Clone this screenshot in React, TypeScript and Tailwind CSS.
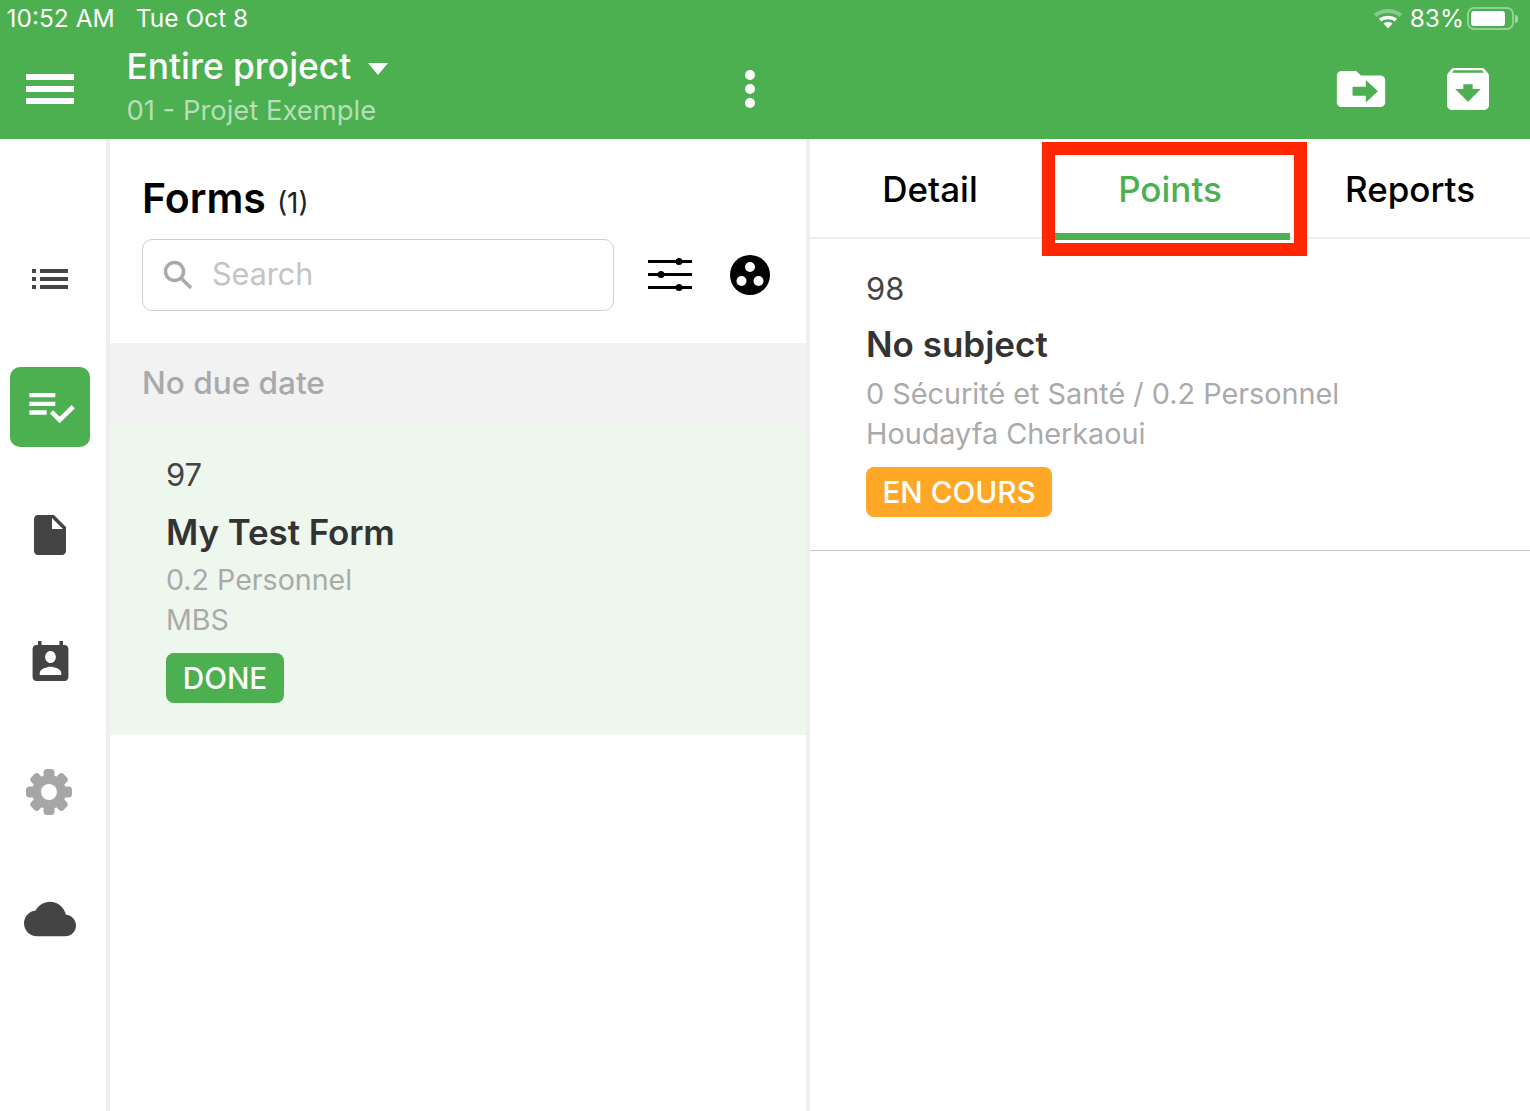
const SideIcon = ({ children, active }: { children: React.ReactNode; active?: boolean }) => (
  <div className="h-[128px] flex items-center justify-center">
    <div className={`w-[80px] h-[80px] rounded-[10px] flex items-center justify-center ${active ? "bg-[#4CAF50]" : ""}`}>
      {children}
    </div>
  </div>
);

const StatusBar = () => (
  <div className="h-[38px] pb-[1px] flex items-center justify-between pl-[6.5px] pr-[12px] text-white text-[24.5px] leading-none">
    <div className="flex gap-[21px]">
      <span>10:52 AM</span>
      <span>Tue Oct 8</span>
    </div>
    <div className="flex items-center">
      <svg width="28" height="22" viewBox="0 0 28 22" className="mr-[8px]">
        <path d="M1 7.5C8 1.5 20 1.5 27 7.5" fill="none" stroke="#fff" strokeOpacity="0.35" strokeWidth="4" />
        <path d="M6 12C10.500 8.500 17.500 8.500 22 12" fill="none" stroke="#fff" strokeWidth="3.500" />
        <path d="M9.500 15.500C12 13.500 16 13.500 18.500 15.500L14 20.500Z" fill="#fff" />
      </svg>
      <span className="mr-[3px]">83%</span>
      <div className="w-[47px] h-[23px] rounded-[7px] border-2 border-white/40 p-[2px]">
        <div className="h-full w-[34px] rounded-[3px] bg-white" />
      </div>
      <div className="w-[3px] h-[8px] ml-[1px] rounded-r-full bg-white/50" />
    </div>
  </div>
);

const Header = () => (
  <header className="h-[139px] shrink-0 bg-[#4CAF50] text-white">
    <StatusBar />
    <div className="h-[101px] flex items-center">
      <div className="w-[127px] pl-[26px] shrink-0">
        <div className="w-[48px] flex flex-col gap-[6px]">
          <div className="h-[6px] bg-white" />
          <div className="h-[6px] bg-white" />
          <div className="h-[6px] bg-white" />
        </div>
      </div>
      <div className="w-[618px] shrink-0 self-start">
        <div className="flex items-center h-[56px] mt-[1px]">
          <span className="text-[35.3px] -ml-[0.5px] font-medium leading-none">Entire project</span>
          <svg width="20" height="12" viewBox="0 0 20 12" className="ml-[17px] mt-[3px]">
            <path d="M0 0H20L10 12Z" fill="#fff" />
          </svg>
        </div>
        <div className="text-[27.4px] -ml-[0.5px] leading-none text-white/60 mt-[2px]">01 - Projet Exemple</div>
      </div>
      <div className="flex flex-col gap-[4px] mr-[577px]">
        <div className="w-[10px] h-[10px] rounded-full bg-white" />
        <div className="w-[10px] h-[10px] rounded-full bg-white" />
        <div className="w-[10px] h-[10px] rounded-full bg-white" />
      </div>
      <svg width="58" height="54" viewBox="0 0 24 24" preserveAspectRatio="none" className="shrink-0">
        <path
          fill="#fff"
          fillRule="evenodd"
          d="M20 6h-8l-2-2H4c-1.100 0-2 .9-2 2v12c0 1.100.9 2 2 2h16c1.100 0 2-.9 2-2V8c0-1.100-.9-2-2-2zm-6 12v-3H8.500v-4H14V8l5 5-5 5z"
        />
      </svg>
      <svg width="56" height="56" viewBox="0 0 24 24" className="shrink-0 ml-[50px]">
        <path
          fill="#fff"
          d="M20.540 5.230l-1.390-1.680C18.880 3.210 18.470 3 18 3H6c-.47 0-.88.21-1.160.55L3.460 5.230C3.170 5.570 3 6.020 3 6.500V19c0 1.100.9 2 2 2h14c1.100 0 2-.9 2-2V6.500c0-.48-.17-.93-.46-1.270zM12 17.500L6.500 12H10v-2h4v2h3.500L12 17.500zM5.120 5l.81-1h12l.94 1H5.120z"
        />
      </svg>
    </div>
  </header>
);

const Gear = () => (
  <svg width="48" height="48" viewBox="0 0 48 48" className="-ml-[2px] mt-[1px]">
    {[0, 45, 90, 135, 180, 225, 270, 315].map((a) => (
      <rect key={a} x="18.500" y="1" width="11" height="12" rx="3.500" fill="#a6a6a6" transform={`rotate(${a} 24 24)`} />
    ))}
    <circle cx="24" cy="24" r="17" fill="#a6a6a6" />
    <circle cx="24" cy="24" r="8" fill="#fff" />
  </svg>
);

const Sidebar = () => (
  <aside className="w-[106px] shrink-0 pt-[76px] pr-[6px]">
    <SideIcon>
      <svg width="36" height="20" viewBox="0 0 36 20" fill="#444">
        <rect x="0" y="0" width="4" height="4" />
        <rect x="8" y="0" width="28" height="4" />
        <rect x="0" y="8" width="4" height="4" />
        <rect x="8" y="8" width="28" height="4" />
        <rect x="0" y="16" width="4" height="4" />
        <rect x="8" y="16" width="28" height="4" />
      </svg>
    </SideIcon>
    <SideIcon active>
      <svg width="52" height="52" viewBox="0 0 24 24" fill="#fff" className="ml-[2px] -mt-[3px]">
        <path d="M14 10H2v2h12v-2zm0-4H2v2h12V6zM2 16h8v-2H2v2zm19.500-4.500L23 13l-6.990 7-4.510-4.500L13 14l3.010 3 5.490-5.500z" />
      </svg>
    </SideIcon>
    <SideIcon>
      <svg width="48" height="48" viewBox="0 0 24 24" fill="#444">
        <path d="M6 2c-1.100 0-1.990.9-1.990 2L4 20c0 1.100.89 2 1.990 2H18c1.100 0 2-.9 2-2V8l-6-6H6zm7 7V3.500L18.500 9H13z" />
      </svg>
    </SideIcon>
    <SideIcon>
      <svg width="43" height="48" viewBox="0 0 24 24" fill="#444" preserveAspectRatio="none">
        <path d="M20 3h-1V1h-2v2H7V1H5v2H4c-1.100 0-2 .9-2 2v14c0 1.100.9 2 2 2h16c1.100 0 2-.9 2-2V5c0-1.100-.9-2-2-2zm-8 3c1.660 0 3 1.340 3 3s-1.340 3-3 3-3-1.340-3-3 1.340-3 3-3zm6 12H6v-1c0-2 4-3.100 6-3.100s6 1.100 6 3.100v1z" />
      </svg>
    </SideIcon>
    <SideIcon>
      <Gear />
    </SideIcon>
    <SideIcon>
      <svg width="52" height="52" viewBox="0 0 24 24" fill="#444">
        <path d="M19.350 10.040C18.670 6.590 15.640 4 12 4 9.110 4 6.600 5.640 5.350 8.040 2.340 8.360 0 10.910 0 14c0 3.310 2.690 6 6 6h13c2.760 0 5-2.240 5-5 0-2.640-2.050-4.780-4.650-4.960z" />
      </svg>
    </SideIcon>
  </aside>
);

const FormsList = () => (
  <section className="w-[696px] shrink-0">
    <div className="h-[204px] pl-[32px]">
      <div className="h-[100px] flex items-baseline pt-[34px]">
        <span className="text-[41px] font-semibold leading-[50px] text-black">Forms</span>
        <span className="text-[28px] ml-[11px] text-[#222]">(1)</span>
      </div>
      <div className="flex items-center">
        <div className="w-[472px] h-[72px] rounded-[10px] border border-[#cfcfcf] flex items-center pl-[19px]">
          <svg width="32" height="32" viewBox="0 0 32 32" fill="none" stroke="#aaa" strokeWidth="3.500">
            <circle cx="12.500" cy="12.500" r="9" />
            <path d="M19 19L29 29" />
          </svg>
          <span className="ml-[18px] -mt-[2px] text-[30.5px] text-[#c4c4c4]">Search</span>
        </div>
        <svg width="46" height="36" viewBox="0 0 46 36" className="ml-[34px]">
          <g fill="#000">
            <rect x="0" y="3" width="44" height="3" />
            <circle cx="31" cy="4.500" r="3.500" />
            <rect x="0" y="16" width="44" height="3" />
            <circle cx="13" cy="17.500" r="3.500" />
            <rect x="0" y="29" width="44" height="3" />
            <circle cx="31" cy="30.500" r="3.500" />
          </g>
        </svg>
        <svg width="40" height="40" viewBox="0 0 40 40" className="ml-[36px]">
          <circle cx="20" cy="20" r="20" fill="#000" />
          <circle cx="20" cy="12" r="5" fill="#fff" />
          <circle cx="11.500" cy="26" r="5" fill="#fff" />
          <circle cx="28.500" cy="26" r="5" fill="#fff" />
        </svg>
      </div>
    </div>
    <div className="h-[82px] bg-[#f2f2f2] pl-[32px] flex items-center text-[31.5px] font-medium text-[#a9a9a9]">
      <span className="-mt-[2px]">No due date</span>
    </div>
    <div className="h-[310px] bg-[#edf7ee] pl-[56px] pt-[30px]">
      <div className="text-[31px] leading-[40px] text-[#444]">97</div>
      <div className="text-[35px] font-semibold leading-[44px] mt-[15px] text-[#333] tracking-[-0.1px]">My Test Form</div>
      <div className="text-[28.6px] leading-[40px] mt-[6px] text-[#aaa]">0.2 Personnel</div>
      <div className="text-[28.6px] leading-[40px] text-[#aaa]">MBS</div>
      <div className="mt-[13px] w-[118px] h-[50px] rounded-[8px] bg-[#4CAF50] text-white text-[29.7px] font-medium flex items-center justify-center">
        DONE
      </div>
    </div>
  </section>
);

const Tab = ({ label, active }: { label: string; active?: boolean }) => (
  <div className={`w-[240px] h-[99px] pt-[2px] flex items-center justify-center text-[35px] font-medium ${active ? "text-[#4CAF50]" : "text-black"}`}>
    {label}
  </div>
);

const Detail = () => (
  <section className="relative flex-1 min-w-0">
    <div className="flex border-b-2 border-[#eeeeee] h-[100px]">
      <Tab label="Detail" />
      <Tab label="Points" active />
      <Tab label="Reports" />
    </div>
    {/* underline of the active tab and the red annotation drawn over the screenshot */}
    <div className="absolute left-[245px] top-[94px] w-[235px] h-[7px] bg-[#4CAF50]" />
    <div className="absolute left-[232px] top-[3px] w-[265px] h-[114px] border-[13px] border-[#ff2600]" />
    <div className="h-[312px] border-b border-[#c8c8c8] pl-[56px] pt-[30px]">
      <div className="text-[31px] leading-[40px] text-[#444]">98</div>
      <div className="text-[35px] font-semibold leading-[44px] mt-[13px] text-[#333]">No subject</div>
      <div className="text-[28.8px] leading-[40px] mt-[8px] text-[#aaa]">0 Sécurité et Santé / 0.2 Personnel</div>
      <div className="text-[28.8px] leading-[40px] text-[#aaa]">Houdayfa Cherkaoui</div>
      <div className="mt-[13px] w-[186px] h-[50px] rounded-[8px] bg-[#FFA726] text-white text-[29.7px] font-medium flex items-center justify-center">
        EN COURS
      </div>
    </div>
  </section>
);

export default function App() {
  return (
    <div className="w-[1530px] h-[1111px] overflow-hidden bg-white flex flex-col font-['Inter',sans-serif]">
      <Header />
      <div className="flex flex-1 min-h-0">
        <Sidebar />
        <div className="w-[4px] shrink-0 bg-[#eeeeee]" />
        <FormsList />
        <div className="w-[4px] shrink-0 bg-[#eeeeee]" />
        <Detail />
      </div>
    </div>
  );
}
